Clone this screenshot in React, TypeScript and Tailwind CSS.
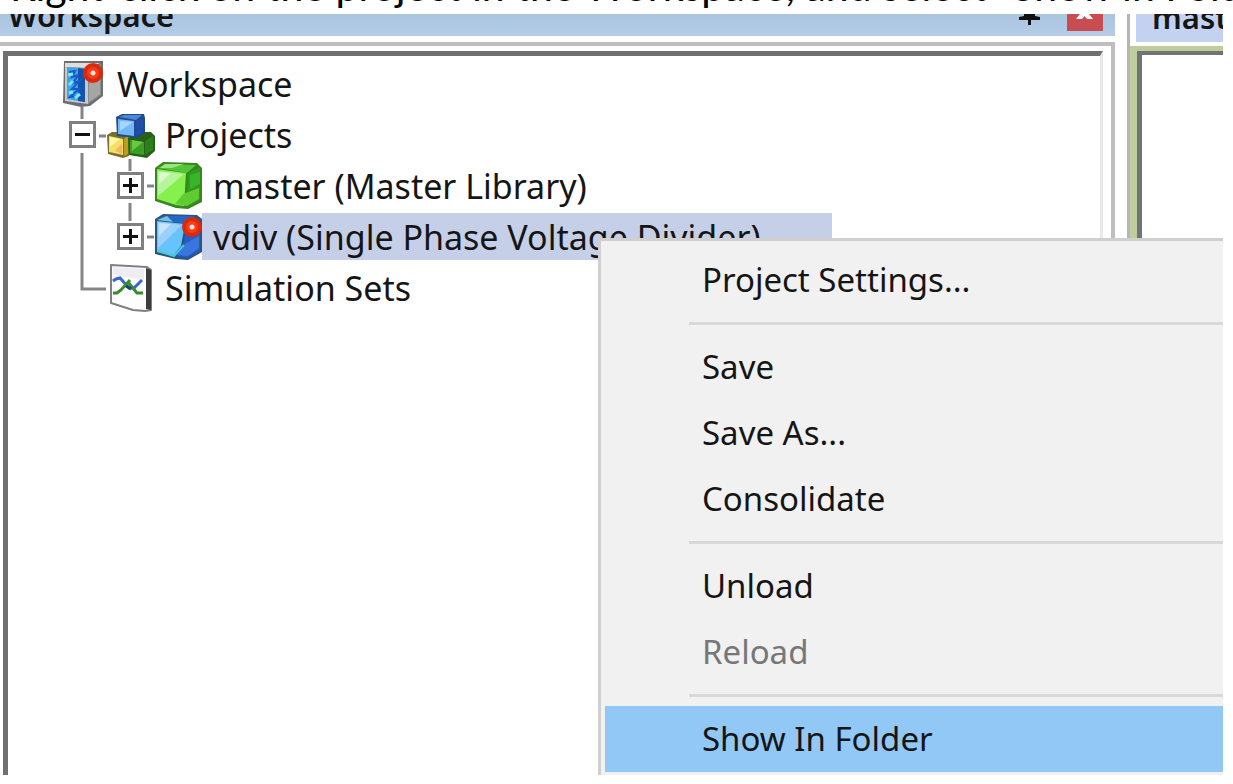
import type { ReactNode } from "react";

function RedDot({ x, y }: { x: number; y: number }) {
  return (
    <g>
      <circle cx={x} cy={y} r="10" fill="#d92a10" />
      <circle cx={x} cy={y} r="6" fill="#fa3c14" />
      <circle cx={x} cy={y} r="2.5" fill="#ffe4dc" />
    </g>
  );
}

function WorkspaceIcon() {
  return (
    <svg viewBox="0 0 48 51" className="h-full w-full overflow-visible" aria-hidden="true">
      <path d="M6 3H45V38L32 48L23 49L5 45Z" fill="#6e6e6e" />
      <path d="M7 5H42L31 10L7 9Z" fill="#dedede" />
      <path d="M7 9L30 11V46L7 43Z" fill="#c4c9d0" />
      <path d="M30 12L43 6V37L30 46Z" fill="#8b8b8b" />
      <path d="M31 26L42 20V36L31 44Z" fill="#a6a6a6" />
      <path d="M9 9L27 11V44L9 41Z" fill="#38a9e2" />
      <path d="M20 10L27 11V44L20 43Z" fill="#1453ac" />
      <path d="M11 14L17 13L14 19L20 17L15 25L21 23L14 31L21 31L12 39L21 38" fill="none" stroke="#1b57d0" strokeWidth="2" />
      <path d="M10 17L15 16M11 27L15 23M11 35L15 34M17 40L22 36" fill="none" stroke="#7de8ee" strokeWidth="3" />
      <RedDot x={35} y={15} />
    </svg>
  );
}

function ProjectsIcon() {
  return (
    <svg viewBox="0 0 48 51" className="h-full w-full overflow-visible" aria-hidden="true">
      <path d="M1 26L6 23H21L23 28V47L17 49L2 45Z" fill="#77702d" />
      <path d="M3 27L17 30V46L3 43Z" fill="#f4df68" />
      <path d="M4 28L14 30L4 38Z" fill="#fdf6a4" />
      <path d="M9 42L16 34V45Z" fill="#f8b36b" />
      <path d="M18 30L22 26V45L18 47Z" fill="#bc9d20" />
      <path d="M22 29L32 23H45L49 27V42L41 49L23 46Z" fill="#286019" />
      <path d="M24 31L38 33V46L24 44Z" fill="#3c9e25" />
      <path d="M26 31L37 33L26 42Z" fill="#69c843" />
      <path d="M39 32L47 27V41L39 46Z" fill="#2c7f19" />
      <path d="M10 8L16 5H38L39 9V24L31 29L11 27Z" fill="#234b87" />
      <path d="M13 8L18 6H36L30 11Z" fill="#4c88d8" />
      <path d="M12 10L28 12V27L12 25Z" fill="#72b7f6" />
      <path d="M14 12L27 13L14 22Z" fill="#a6d5fa" />
      <path d="M30 12L37 8V23L30 27Z" fill="#1e4ea7" />
    </svg>
  );
}

function LibraryIcon() {
  return (
    <svg viewBox="0 0 48 51" className="h-full w-full overflow-visible" aria-hidden="true">
      <path d="M1 8L9 2L43 3L48 8V42L34 49L22 48L1 41Z" fill="#3b8420" />
      <path d="M4 8L11 4L42 5L33 13Z" fill="#55c43a" />
      <path d="M11 4L30 4L18 8L6 8Z" fill="#98e67d" />
      <path d="M3 9L32 13L30 46L22 45L3 39Z" fill="#86f04c" />
      <path d="M4 11L30 14L4 36Z" fill="#b5f59b" />
      <path d="M5 12L17 13L5 24Z" fill="#dcfad0" />
      <path d="M34 13L46 7V40L33 46Z" fill="#2e9a20" />
      <path d="M36 15L46 12V24L36 29Z" fill="#39b52a" />
      <path d="M29 34L45 28V39L33 46L21 44Z" fill="#61cc31" />
    </svg>
  );
}

function CaseIcon() {
  return (
    <svg viewBox="0 0 48 51" className="h-full w-full overflow-visible" aria-hidden="true">
      <path d="M1 8L9 3L43 4L48 8V41L34 49L22 48L1 43Z" fill="#2b5480" />
      <path d="M4 8L11 5L40 5L32 13Z" fill="#2468c4" />
      <path d="M3 9L13 5L19 11Z" fill="#78bde0" />
      <path d="M3 10L31 13L27 35L19 45L3 41Z" fill="#66c3fb" />
      <path d="M4 11L28 14L4 37Z" fill="#9bd0fa" />
      <path d="M5 12L17 13L5 25Z" fill="#c8e4fc" />
      <path d="M32 14L46 9V40L33 47L22 45L30 33Z" fill="#245bc4" />
      <path d="M31 33L45 25V37L34 45L23 44Z" fill="#3976e0" />
      <path d="M4 40L20 45L30 34" fill="none" stroke="#45ccd4" strokeWidth="2" />
      <RedDot x={38} y={16} />
    </svg>
  );
}

function SimulationIcon() {
  return (
    <svg viewBox="0 0 48 51" className="h-full w-full overflow-visible" aria-hidden="true">
      <path d="M5 3L41 5L45 8V48L39 49L27 48L5 41Z" fill="#fdfdfd" stroke="#808080" strokeWidth="2" strokeLinejoin="round" />
      <path d="M7 5L38 7V18L7 13Z" fill="#ededf4" />
      <path d="M40 6L45 8V48L40 47Z" fill="#3c3c3c" />
      <path d="M7 19L10 17L14 16L23 26L28 26L36 18" fill="none" stroke="#3467d3" strokeWidth="3" />
      <path d="M7 31H11L15 28L24 18M22 20L31 31H37" fill="none" stroke="#398c2b" strokeWidth="3" />
      <path d="M20 24L25 27" stroke="#203d78" strokeWidth="3" />
    </svg>
  );
}

function Guides({ d }: { d: string }) {
  return (
    <svg viewBox="0 0 48 51" className="absolute inset-0 h-full w-full overflow-visible" aria-hidden="true">
      <path d={d} fill="none" stroke="#858585" strokeWidth="3" />
    </svg>
  );
}

function Cell({ guides, toggle }: { guides: string; toggle?: { open: boolean; label: string } }) {
  return (
    <span className="relative grid w-12 shrink-0 place-items-center">
      <Guides d={guides} />
      {toggle && (
        <button
          type="button"
          aria-label={toggle.label}
          aria-expanded={toggle.open}
          className="relative grid size-[27px] place-items-center border-[3px] border-[#808080] bg-white"
        >
          <svg viewBox="0 0 15 15" className="size-[15px]" aria-hidden="true">
            <path d={toggle.open ? "M0 7.5H15" : "M0 7.5H15M7.5 0V15"} stroke="#111" strokeWidth="3" />
          </svg>
        </button>
      )}
    </span>
  );
}

function Row({ icon, label, selected, children }: { icon: ReactNode; label: string; selected?: boolean; children?: ReactNode }) {
  return (
    <li className="flex h-[51px] items-stretch">
      {children}
      <span className="w-12 shrink-0">{icon}</span>
      <span
        className={
          selected
            ? "my-[2px] flex w-[630px] items-center bg-[#c5d0e8] pl-[11px] whitespace-pre"
            : "flex items-center pl-[11px] whitespace-pre"
        }
      >
        {label}
      </span>
    </li>
  );
}

function MenuItem({ label, disabled, active }: { label: string; disabled?: boolean; active?: boolean }) {
  return (
    <button
      type="button"
      role="menuitem"
      disabled={disabled}
      className={
        active
          ? "ml-1 flex h-[66px] items-center bg-[#91c8f6] pl-[97px] text-left text-[#151515]"
          : "ml-1 flex h-[66px] items-center pl-[97px] text-left text-[#151515] disabled:text-[#777]"
      }
    >
      {label}
    </button>
  );
}

function Separator() {
  return <hr className="my-[9px] ml-[88px] h-[3px] border-0 bg-[#d9d9d9]" />;
}

export default function App() {
  return (
    <main className="flex h-screen flex-col overflow-hidden bg-white pr-[10px] pb-[9px] text-[#151515]">
      <p className="flex h-[14px] shrink-0 items-end pb-1 pl-[10px] font-['Lato',sans-serif] text-[41px] leading-[48px] whitespace-nowrap text-black">
        Right-click on the project in the Workspace, and select “Show in Folder”
      </p>

      <div className="relative flex min-h-0 flex-1 overflow-hidden">
        <section className="flex min-w-0 flex-1 flex-col">
          <header className="flex h-[22px] shrink-0 items-end justify-between overflow-hidden bg-linear-to-b from-[#a9c5df] to-[#b4cce7] pr-3 pl-2">
            <h1 className="pb-[5px] font-['Noto_Sans',sans-serif] text-[31px] leading-8 font-semibold">Workspace</h1>
            <div className="flex h-full items-start gap-[27px]">
              <button type="button" aria-label="Pin" className="h-[11px] w-[21px]">
                <svg viewBox="0 0 21 11" className="h-full w-full" aria-hidden="true">
                  <path d="M5 0H16V2L21 3V6H12V11H9V6H0V3L5 2Z" fill="#111" />
                </svg>
              </button>
              <button type="button" aria-label="Close" className="h-[17px] w-9 bg-[#c94d50]">
                <svg viewBox="0 0 36 17" className="h-full w-full" aria-hidden="true">
                  <path d="M13 0H22L26 5H20L17.5 2L15 5H9Z" fill="#fff" />
                </svg>
              </button>
            </div>
          </header>
          <div className="mt-[6px] flex min-h-0 flex-1 border-t-4 border-r-4 border-[#bebebe]">
            <div className="mt-[5px] mr-2 ml-[3px] flex-1 border-t-[5px] border-r-[3px] border-l-[5px] border-t-[#707070] border-r-[#e8e8e8] border-l-[#707070] bg-white pt-[2px] pl-[50px]">
              <ul aria-label="Workspace tree" className="font-['Noto_Sans',sans-serif] text-[34px] leading-10">
                <Row icon={<WorkspaceIcon />} label="Workspace" />
                <Row icon={<ProjectsIcon />} label="Projects">
                  <Cell guides="M24 -2V10M24 44V51M41 27H48" toggle={{ open: true, label: "Collapse Projects" }} />
                </Row>
                <Row icon={<LibraryIcon />} label="master (Master Library)">
                  <Cell guides="M24 0V51" />
                  <Cell guides="M24 -1V11M24 43V51M41 26H48" toggle={{ open: false, label: "Expand master" }} />
                </Row>
                <Row icon={<CaseIcon />} label="vdiv (Single Phase Voltage Divider)" selected>
                  <Cell guides="M24 0V51" />
                  <Cell guides="M24 0V10M41 26H48" toggle={{ open: false, label: "Expand vdiv" }} />
                </Row>
                <Row icon={<SimulationIcon />} label="Simulation Sets">
                  <Cell guides="M24 0V27H48" />
                </Row>
              </ul>
            </div>
          </div>
        </section>

        <section className="ml-3 flex w-24 shrink-0 flex-col border-l-[3px] border-[#b5b5b5]">
          <div className="ml-[6px] flex h-7 items-end overflow-hidden bg-[#c4d2f1] pl-4">
            <h2 className="pb-[9px] font-['Noto_Sans',sans-serif] text-[31px] leading-8 font-semibold whitespace-nowrap">master</h2>
          </div>
          <div className="mt-1 flex-1 border-t-[5px] border-l-[7px] border-[#bdce9c]">
            <div className="h-full border-t-4 border-l-[5px] border-[#737373]" />
          </div>
        </section>

        <div
          role="menu"
          aria-label="Project menu"
          className="absolute top-[224px] right-0 bottom-0 left-[598px] flex flex-col overflow-hidden border-t-[3px] border-l-[3px] border-[#cfcfcf] bg-[#f1f1f1] pt-[6px] font-['Noto_Sans',sans-serif] text-[33px] leading-10"
        >
          <MenuItem label="Project Settings..." />
          <Separator />
          <MenuItem label="Save" />
          <MenuItem label="Save As..." />
          <MenuItem label="Consolidate" />
          <Separator />
          <MenuItem label="Unload" />
          <MenuItem label="Reload" disabled />
          <Separator />
          <MenuItem label="Show In Folder" active />
        </div>
      </div>
    </main>
  );
}
